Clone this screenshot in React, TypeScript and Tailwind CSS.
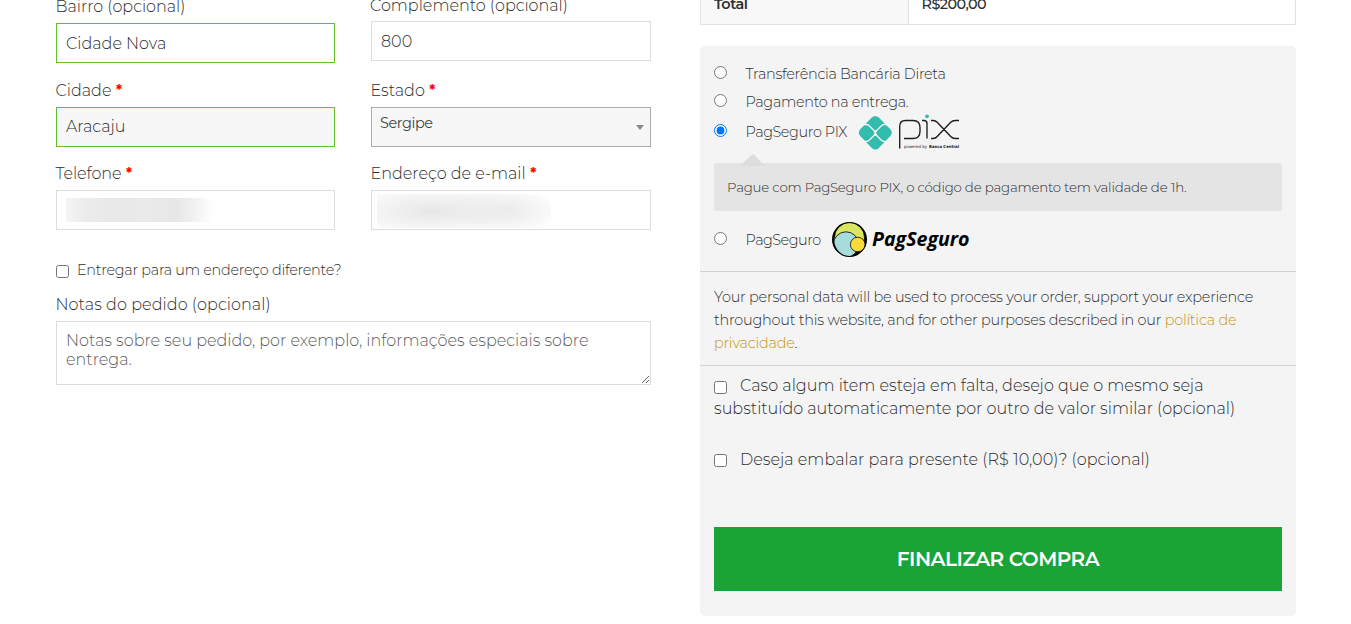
import type { ReactNode } from "react";

function Label({ children, required, className = "" }: { children: ReactNode; required?: boolean; className?: string }) {
  return (
    <div className={`-ml-[0.5px] flex h-[23px] items-center whitespace-pre text-[16px] leading-[23px] ${className}`}>
      {children}
      {required && <span className="ml-[4.5px] text-[14px] font-bold text-[#ff0000]">*</span>}
    </div>
  );
}

function PixLogo() {
  return (
    <svg className="-ml-px h-[36px] w-[102px] shrink-0" viewBox="0 0 102 36">
      <g transform="translate(0.300 0.400)">
        <path fill="#32bcad" d="M13.500 3.200Q17 .2 20.500 3.200L31.800 14.700Q35.200 18.300 31.800 21.900L20.500 33.600Q17 36.600 13.500 33.600L2.200 21.900Q-1.200 18.300 2.200 14.700Z" />
        <path fill="none" stroke="#f4f4f4" strokeWidth="1.300" d="M5 10.100h3q1.700 0 2.900 1.200l4.500 4.500q1.600 1.400 3.200 0l4.500-4.500q1.200-1.200 2.900-1.200h3M5 27h3q1.700 0 2.900-1.200l4.500-4.500q1.600-1.400 3.200 0l4.500 4.500Q24.300 27 26 27h3M15.400 15.800l3.200 5.500M18.600 15.800l-3.200 5.500" />
      </g>
      <g fill="none" stroke="#1d1d1b" strokeWidth="1.350">
        <path d="M41.700 34.500V12.300Q41.700 6.500 47.500 6.500H55q7 0 7 7v4q0 7-7 7H46" />
        <path d="M64 6.500h2q3 0 3 3v15" />
        <path d="M73 6.500h2q2.500 0 4.200 1.800l13.500 14.200q1.800 2 4.500 2h3.800M73 24.500h2q2.500 0 4.200-2L92.700 8.300q1.800-1.800 4.500-1.800h3.800" />
      </g>
      <circle cx="69" cy="2.300" r="1.900" fill="#32bcad" />
      <text x="46" y="34.200" fill="#222" fontFamily="DejaVu Sans, sans-serif" fontWeight="400" fontSize="4.200" textLength="23" lengthAdjust="spacingAndGlyphs">powered by</text>
      <text x="71" y="34.200" fill="#111" fontFamily="DejaVu Sans, sans-serif" fontWeight="bold" fontSize="4.200" textLength="30" lengthAdjust="spacingAndGlyphs">Banco Central</text>
    </svg>
  );
}

function PagSeguroLogo() {
  return (
    <svg className="h-[36px] w-[140px] shrink-0" viewBox="0 0 140 36">
      <defs>
        <clipPath id="disc"><ellipse cx="17.500" cy="17.500" rx="15.300" ry="16.500" /></clipPath>
      </defs>
      <circle cx="17.500" cy="17.500" r="17.500" fill="#000" />
      <g clipPath="url(#disc)" stroke="#000" strokeWidth=".8">
        <circle cx="17.500" cy="15.500" r="15" fill="#dbe55f" />
        <circle cx="14" cy="22.500" r="12.700" fill="#a6dcda" />
      </g>
      <circle cx="25.700" cy="22.500" r="7.300" fill="#f9dc3c" stroke="#000" strokeWidth=".8" />
      <text x="40" y="24" fill="#000" fontFamily="Open Sans, sans-serif" fontStyle="italic" fontWeight="700" fontSize="20" textLength="97.500" lengthAdjust="spacingAndGlyphs">PagSeguro</text>
    </svg>
  );
}

function Radio({ checked }: { checked?: boolean }) {
  return <input type="radio" name="payment" defaultChecked={checked} className="m-0 block size-[13px] shrink-0" />;
}

function Check() {
  return <input type="checkbox" className="m-0 block size-[13px] shrink-0" />;
}

export default function App() {
  return (
    <div className="flex h-[624px] w-[1351px] overflow-hidden bg-white pl-[56px] font-['Montserrat','Inter',sans-serif] font-light text-[#2e2e2e]">
      <section className="w-[595px]">
        <div className="flex justify-between">
          <div className="flex w-[279px] flex-col">
            <Label className="-mt-[5px]">Bairro (opcional)</Label>
            <div className="mt-[5px] flex h-[40px] items-center border border-[#69bf29] px-[9px] pt-[2px] text-[16px]">Cidade Nova</div>
            <Label required className="mt-[16px]">Cidade</Label>
            <div className="mt-[5px] flex h-[40px] items-center border border-[#69bf29] bg-[#f7f7f7] px-[9px] text-[16px]">Aracaju</div>
            <Label required className="mt-[15px] tracking-[-0.1px]">Telefone</Label>
            <div className="mt-[5px] flex h-[40px] items-center border border-[#dddddd] px-[9px]">
              <div className="h-[24px] w-[147px] bg-[linear-gradient(90deg,#f5f5f5_0%,#ececec_12%,#e8e8e8_30%,#eaeaea_55%,#e7e7e7_75%,#f2f2f2_88%,#fff_100%)]" />
            </div>
          </div>
          <div className="flex w-[280px] flex-col">
            <Label className="-mt-[6px] -translate-x-[0.5px]">Complemento (opcional)</Label>
            <div className="mt-[4px] flex h-[40px] items-center border border-[#dddddd] px-[9px] pt-[2px] text-[16px]">800</div>
            <Label required className="mt-[18px]">Estado</Label>
            <div className="mt-[5px] flex h-[40px] items-center justify-between border border-[#aaaaaa] bg-[#f7f7f7] pl-[8px] pr-[6px]">
              <span className="mb-[7px] text-[14.500px] font-normal tracking-[-0.450px] text-[#444]">Sergipe</span>
              <svg className="h-[5px] w-[8px]" viewBox="0 0 8 5"><path d="M0 0h8L4 5z" fill="#888" /></svg>
            </div>
            <Label required className="mt-[15px]">Endereço de e-mail</Label>
            <div className="mt-[5px] flex h-[40px] items-end border border-[#dddddd] pl-[5px]">
              <div className="mb-px h-[34px] w-[174px] bg-[radial-gradient(ellipse_80px_22px_at_32%_50%,#e7e7e7_0%,#e7e7e700_100%),radial-gradient(ellipse_60px_22px_at_74%_50%,#ebebeb_0%,#ebebeb00_100%),linear-gradient(90deg,#fafafa_0%,#f9f9f9_65%,#ffffff_100%)]" />
            </div>
          </div>
        </div>
        <div className="mt-[29px] flex h-[24px] items-center">
          <Check />
          <span className="mb-px ml-[8px] whitespace-nowrap text-[14.400px] tracking-[-0.260px]">Entregar para um endereço diferente?</span>
        </div>
        <Label className="mt-[10px] tracking-[0.080px]">Notas do pedido (opcional)</Label>
        <textarea
          className="mt-[5px] block h-[64px] w-[595px] resize border border-[#dddddd] bg-white px-[9px] pt-[9px] text-[16px] leading-[19px] placeholder:text-[#5c5c5c]"
          placeholder="Notas sobre seu pedido, por exemplo, informações especiais sobre entrega."
        />
      </section>

      <section className="ml-[49px] w-[596px]">
        <div className="flex h-[25px] border-x border-b border-[#e1e1e1] text-[14.400px] leading-[22px]">
          <div className="w-[208px] border-r border-[#e1e1e1] bg-[#f8f8f8] pl-[13px] font-semibold tracking-[-0.5px]"><span className="-mt-[7px] block">Total</span></div>
          <div className="pl-[12.500px] font-medium tracking-[-0.550px]"><span className="-mt-[7px] block">R$200,00</span></div>
        </div>

        <div className="mt-[21px] flex h-[570px] flex-col rounded-[5px] bg-[#f4f4f4]">
          <div className="flex h-[225px] flex-col px-[14px] pt-[14px] text-[14.400px]">
            <div className="flex h-[28px] items-start pt-[6px]">
              <Radio /><span className="ml-[18.500px] leading-[16px] tracking-[-0.300px]">Transferência Bancária Direta</span>
            </div>
            <div className="flex h-[22px] items-start pt-[6px]">
              <Radio /><span className="ml-[18.500px] leading-[16px] tracking-[-0.300px]">Pagamento na entrega.</span>
            </div>
            <div className="flex h-[53px] items-start pt-[4px]">
              <div className="pt-[10px]"><Radio checked /></div>
              <span className="ml-[18.500px] w-[113.500px] pt-[10px] leading-[16px] tracking-[-0.350px]">PagSeguro PIX</span>
              <PixLogo />
            </div>
            <div className="relative flex h-[48px] shrink-0 items-center rounded-[2px] bg-[#e4e4e4] pl-[13px] pt-px text-[13.300px] tracking-[-0.180px]">
              <svg className="absolute -top-[9px] left-[26px] h-[12px] w-[25px]" viewBox="0 0 25 12"><path d="M0 12 12 .5h2L25 12z" fill="#dfdcde" /></svg>
              Pague com PagSeguro PIX, o código de pagamento tem validade de 1h.
            </div>
            <div className="flex h-[58px] items-start pt-[11px]">
              <div className="pt-[10px]"><Radio /></div>
              <span className="ml-[18.500px] w-[86.500px] pt-[10px] leading-[16px] tracking-[-0.430px]">PagSeguro</span>
              <PagSeguroLogo />
            </div>
          </div>
          <div className="h-[94px] whitespace-nowrap border-t border-[#d2d0d1] px-[14px] pt-[14px] text-[14.400px] leading-[23px] tracking-[-0.200px]">
            <div>Your personal data will be used to process your order, support your experience</div>
            <div>throughout this website, and for other purposes described in our <span className="text-[#c99310]">política de</span></div>
            <div><span className="text-[#c99310]">privacidade</span>.</div>
          </div>
          <div className="h-[162px] whitespace-nowrap border-t border-[#d2d0d1] px-[14px] pt-[8px] text-[16px] leading-[23px]">
            <div className="flex tracking-[0.025px]">
              <div className="pt-[7px]"><Check /></div><span className="ml-[13px]">Caso algum item esteja em falta, desejo que o mesmo seja</span>
            </div>
            <div>substituído automaticamente por outro de valor similar (opcional)</div>
            <div className="mt-[28px] flex tracking-[0.030px]">
              <div className="pt-[6px]"><Check /></div><span className="ml-[13px]">Deseja embalar para presente (R$ 10,00)? (opcional)</span>
            </div>
          </div>
          <button className="mx-[14px] h-[64px] bg-[#1aa336] text-[20px] font-semibold tracking-[-0.520px] text-white">FINALIZAR COMPRA</button>
        </div>
      </section>
    </div>
  );
}
